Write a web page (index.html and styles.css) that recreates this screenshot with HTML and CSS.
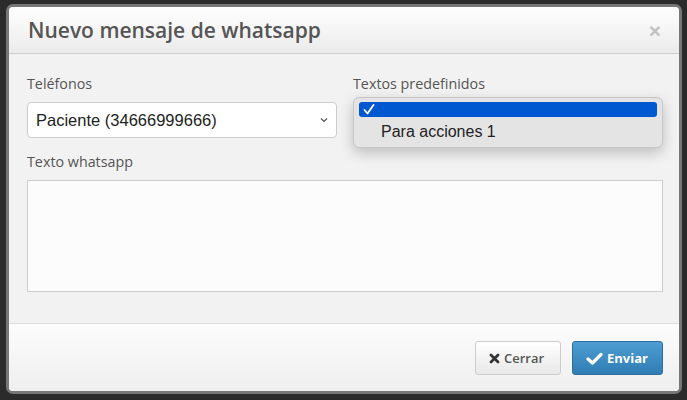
FILE: index.html
```html
<!DOCTYPE html>
<html lang="es">

<head>
    <meta charset="UTF-8">
    <meta name="viewport" content="width=device-width, initial-scale=1.0">
    <title>Nuevo mensaje de whatsapp</title>
    <link rel="stylesheet" href="styles.css">
</head>

<body>
    <div class="modal">
        <div class="modal-header">
            <h4 class="modal-title">Nuevo mensaje de whatsapp</h4>
            <button class="close">&times;</button>
        </div>

        <div class="modal-body">
            <div class="row">
                <div class="field">
                    <label>Teléfonos</label>
                    <div class="select">
                        <span>Paciente (34666999666)</span>
                        <svg class="caret" width="8" height="6" viewBox="0 0 8 6">
                            <polyline points="1,1.5 4,4.5 7,1.5" fill="none" stroke="#555" stroke-width="1.2" />
                        </svg>
                    </div>
                </div>
                <div class="field">
                    <label>Textos predefinidos</label>
                    <div class="select-wrap">
                        <div class="select"></div>
                        <!-- lista desplegada del select -->
                        <ul class="options">
                            <li class="selected">
                                <svg width="12" height="11" viewBox="0 0 12 11">
                                    <polyline points="1.5,6 4.5,9.5 10.5,1" fill="none" stroke="#fff" stroke-width="1.8" stroke-linecap="round" stroke-linejoin="round" />
                                </svg>
                            </li>
                            <li>Para acciones 1</li>
                        </ul>
                    </div>
                </div>
            </div>
            <div class="field">
                <label>Texto whatsapp</label>
                <textarea></textarea>
            </div>
        </div>

        <div class="modal-footer">
            <button class="btn btn-default">
                <svg width="11" height="11" viewBox="0 0 11 11">
                    <path d="M2 2 L9 9 M9 2 L2 9" stroke="#333" stroke-width="2.8" stroke-linecap="round" />
                </svg>
                Cerrar
            </button>
            <button class="btn btn-primary">
                <svg width="17" height="13" viewBox="0 0 17 13">
                    <polyline points="2,7 6.5,11 15,2.5" fill="none" stroke="#fff" stroke-width="3.2" stroke-linecap="round" stroke-linejoin="round" />
                </svg>
                Enviar
            </button>
        </div>
    </div>
</body>

</html>
```

FILE: styles.css
```css
body,
html {
    margin: 0;
    padding: 0;
}

* {
    box-sizing: border-box;
}

body {
    background: #2b2b2b;
    height: 400px;
    overflow: hidden;
    font-family: "Open Sans", "Liberation Sans", sans-serif;
}

.modal {
    margin: 4px 5px 6px 6px;
    border: 3px solid #777;
    border-radius: 7px;
    overflow: hidden;
    background: #f2f2f2;
}

.modal-header {
    height: 47px;
    display: flex;
    align-items: center;
    justify-content: space-between;
    padding: 0 18px 0 19px;
    border-bottom: 1px solid #cfcfcf;
    background: linear-gradient(#ffffff, #ebebeb);
}

.modal-title {
    margin: 0;
    font-size: 21px;
    font-weight: 600;
    color: #555;
}

.close {
    border: 0;
    background: none;
    padding: 0;
    font-family: "Liberation Sans", sans-serif;
    font-size: 21px;
    font-weight: bold;
    line-height: 1;
    color: #c2c2c2;
}

.modal-body {
    height: 269px;
    padding: 20px 16px 0 18px;
    background: #f2f2f2;
}

.row {
    display: flex;
    gap: 16px;
    margin-bottom: 14px;
}

.row .field {
    flex: 1;
}

label {
    display: block;
    font-size: 14.3px;
    line-height: 20px;
    color: #555;
    margin-bottom: 8px;
}

.select {
    height: 36px;
    display: flex;
    align-items: center;
    justify-content: space-between;
    padding: 0 8px 0 8px;
    border: 1px solid #ccc;
    border-radius: 4px;
    background: #fff;
    font-family: "Liberation Sans", Arial, sans-serif;
    font-size: 16.5px;
    color: #222;
}

.select-wrap {
    position: relative;
}

.options {
    position: absolute;
    top: -5px;
    left: 0;
    right: 0;
    margin: 0;
    padding: 4px 5px 2px;
    list-style: none;
    background: #e4e4e4;
    border: 1px solid #c6c6c6;
    border-radius: 6px;
    box-shadow: 0 5px 14px rgba(0, 0, 0, 0.22);
    font-family: "Liberation Sans", Arial, sans-serif;
    font-size: 16px;
    color: #222;
}

.options li {
    height: 28px;
    line-height: 30px;
    padding-left: 22px;
}

.options li.selected {
    height: 15px;
    padding-left: 4px;
    display: flex;
    align-items: center;
    background: #0058d0;
    border-radius: 3px;
}

textarea {
    display: block;
    width: 100%;
    height: 112px;
    border: 1px solid #ccc;
    background: #fcfcfc;
    resize: none;
    margin: 0;
}

.modal-footer {
    height: 68px;
    display: flex;
    justify-content: flex-end;
    gap: 11px;
    padding: 17px 16px 0 0;
    border-top: 1px solid #ddd;
    background: linear-gradient(#fcfcfc, #efefef);
}

.btn {
    height: 34px;
    display: flex;
    align-items: center;
    gap: 4px;
    padding: 0 13px;
    border-radius: 3px;
    font-family: "Open Sans", sans-serif;
    font-size: 13px;
    font-weight: 600;
}

.btn-default {
    width: 86px;
    border: 1px solid #ccc;
    background: linear-gradient(#ffffff, #e8e8e8);
    color: #555;
}

.btn-primary {
    width: 91px;
    border: 1px solid #2d6f9e;
    background: linear-gradient(#4d9dd2, #2f7db4);
    color: #fff;
    font-weight: 700;
}
```
